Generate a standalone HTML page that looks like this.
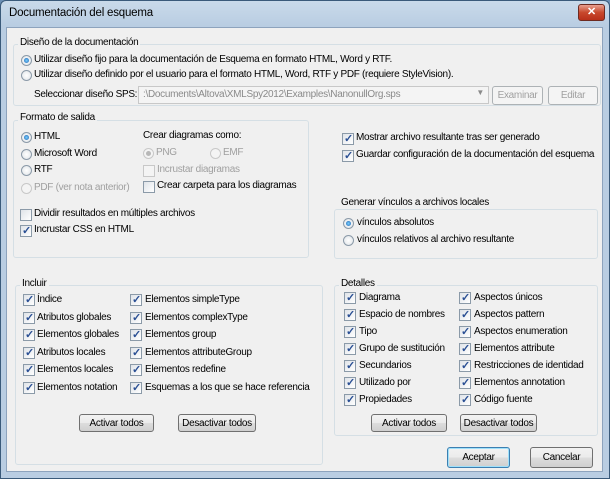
<!DOCTYPE html>
<html><head><meta charset="utf-8"><style>
*{margin:0;padding:0;box-sizing:border-box}
body{width:610px;height:479px;overflow:hidden;background:#6b8fb5;font-family:"Liberation Sans",sans-serif;font-size:10px;letter-spacing:-0.3px;color:#000}
.win{position:absolute;left:0;top:0;width:610px;height:479px;border:1px solid #3a5a7a;border-radius:6px 6px 0 0;background:linear-gradient(#c9daea,#b9cde2 25px);}
.title{position:absolute;left:8px;top:6px;font-size:11.5px;letter-spacing:-0.2px;color:#000}
.close{position:absolute;left:577px;top:3px;width:27px;height:17px;border:1px solid #6d2a20;border-radius:3px;background:linear-gradient(#e8a090,#c8482c 50%,#b8301a);color:#fff;font-weight:bold;text-align:center;line-height:15px;font-size:11px}
.body{position:absolute;left:6px;top:27px;width:597px;height:445px;background:#f0f0f0;border:1px solid #8da3bd}
.a{position:absolute;white-space:nowrap}
.g{position:absolute;border:1px solid #d5dfe5;border-radius:3px}
.gl{position:absolute;background:#f0f0f0;padding:0 2px;white-space:nowrap}
.r{position:absolute;width:11px;height:11px;border-radius:50%;border:1px solid #8b9aa8;background:radial-gradient(#fff,#dde2e6)}
.r.on::after{content:"";position:absolute;left:2px;top:2px;width:5px;height:5px;border-radius:50%;background:radial-gradient(#7ad1ff,#1d5fb0)}
.r.dis{border-color:#c8c8c8;background:#f4f4f4}
.r.dis.on::after{background:#b8b8b8}
.c{position:absolute;width:12px;height:12px;border:1px solid #8b9aa8;background:linear-gradient(135deg,#dfe3e8,#fff)}
.c.on::after{content:"✓";position:absolute;left:1px;top:-2px;font-size:11px;color:#2a4f94;font-weight:bold}
.c.dis{border-color:#c8c8c8;background:#f4f4f4}
.dis-t{color:#a0a0a0}
.b{position:absolute;white-space:nowrap;border:1px solid #707070;border-radius:3px;background:linear-gradient(#f2f2f2,#ebebeb 50%,#dddddd 51%,#cfcfcf);text-align:center;line-height:17px}
.bd{border-color:#adb2b5;color:#a0a0a0;background:#f4f4f4}
</style></head><body>
<div class="win">
<div class="title">Documentación del esquema</div>
<div class="close">✕</div>
</div>
<div style="position:absolute;left:0;top:0">
<div class="body"></div>

<div class="g" style="left:13px;top:44px;width:588px;height:62px"></div>
<div class="gl" style="left:18px;top:37px">Diseño de la documentación</div>
<div class="r on" style="left:21px;top:55px"></div><div class="a" style="left:34px;top:54px">Utilizar diseño fijo para la documentación de Esquema en formato HTML, Word y RTF.</div>
<div class="r" style="left:21px;top:70px"></div><div class="a" style="left:34px;top:69px">Utilizar diseño definido por el usuario para el formato HTML, Word, RTF y PDF (requiere StyleVision).</div>
<div class="a" style="left:34px;top:89px">Seleccionar diseño SPS:</div>
<div class="a" style="left:138px;top:86px;width:351px;height:18px;border:1px solid #c8c8c8;background:#f4f4f4;color:#8a8a8a;padding:2px 4px">:\Documents\Altova\XMLSpy2012\Examples\NanonullOrg.sps<span style="position:absolute;right:4px;top:1px;font-size:8px">▼</span></div>
<div class="b bd" style="left:492px;top:86px;width:51px;height:19px">Examinar</div>
<div class="b bd" style="left:548px;top:86px;width:50px;height:19px">Editar</div>

<div class="g" style="left:13px;top:120px;width:296px;height:138px"></div>
<div class="gl" style="left:18px;top:112px">Formato de salida</div>
<div class="r on" style="left:21px;top:132px"></div><div class="a" style="left:34px;top:131px">HTML</div>
<div class="r" style="left:21px;top:149px"></div><div class="a" style="left:34px;top:148px">Microsoft Word</div>
<div class="r" style="left:21px;top:165px"></div><div class="a" style="left:34px;top:164px">RTF</div>
<div class="r dis" style="left:21px;top:183px"></div><div class="a dis-t" style="left:34px;top:182px">PDF (ver nota anterior)</div>
<div class="a" style="left:143px;top:130px">Crear diagramas como:</div>
<div class="r dis on" style="left:143px;top:148px"></div><div class="a dis-t" style="left:156px;top:147px">PNG</div>
<div class="r dis" style="left:210px;top:148px"></div><div class="a dis-t" style="left:223px;top:147px">EMF</div>
<div class="c dis" style="left:143px;top:165px"></div><div class="a dis-t" style="left:157px;top:164px">Incrustar diagramas</div>
<div class="c" style="left:143px;top:181px"></div><div class="a" style="left:157px;top:180px">Crear carpeta para los diagramas</div>
<div class="c" style="left:20px;top:209px"></div><div class="a" style="left:34px;top:208px">Dividir resultados en múltiples archivos</div>
<div class="c on" style="left:20px;top:225px"></div><div class="a" style="left:34px;top:224px">Incrustar CSS en HTML</div>

<div class="c on" style="left:342px;top:133px"></div><div class="a" style="left:356px;top:132px">Mostrar archivo resultante tras ser generado</div>
<div class="c on" style="left:342px;top:150px"></div><div class="a" style="left:356px;top:149px">Guardar configuración de la documentación del esquema</div>

<div class="g" style="left:334px;top:209px;width:264px;height:50px"></div>
<div class="gl" style="left:339px;top:197px">Generar vínculos a archivos locales</div>
<div class="r on" style="left:343px;top:218px"></div><div class="a" style="left:357px;top:217px">vínculos absolutos</div>
<div class="r" style="left:343px;top:235px"></div><div class="a" style="left:357px;top:234px">vínculos relativos al archivo resultante</div>

<div class="g" style="left:15px;top:285px;width:308px;height:180px"></div>
<div class="gl" style="left:20px;top:278px">Incluir</div>
<div class="c on" style="left:23px;top:294px"></div><div class="a" style="left:37px;top:294px">Índice</div>
<div class="c on" style="left:23px;top:312px"></div><div class="a" style="left:37px;top:312px">Atributos globales</div>
<div class="c on" style="left:23px;top:329px"></div><div class="a" style="left:37px;top:329px">Elementos globales</div>
<div class="c on" style="left:23px;top:347px"></div><div class="a" style="left:37px;top:347px">Atributos locales</div>
<div class="c on" style="left:23px;top:364px"></div><div class="a" style="left:37px;top:364px">Elementos locales</div>
<div class="c on" style="left:23px;top:382px"></div><div class="a" style="left:37px;top:382px">Elementos notation</div>
<div class="c on" style="left:130px;top:294px"></div><div class="a" style="left:145px;top:294px">Elementos simpleType</div>
<div class="c on" style="left:130px;top:312px"></div><div class="a" style="left:145px;top:312px">Elementos complexType</div>
<div class="c on" style="left:130px;top:329px"></div><div class="a" style="left:145px;top:329px">Elementos group</div>
<div class="c on" style="left:130px;top:347px"></div><div class="a" style="left:145px;top:347px">Elementos attributeGroup</div>
<div class="c on" style="left:130px;top:364px"></div><div class="a" style="left:145px;top:364px">Elementos redefine</div>
<div class="c on" style="left:130px;top:382px"></div><div class="a" style="left:145px;top:382px">Esquemas a los que se hace referencia</div>
<div class="b" style="left:79px;top:414px;width:75px;height:18px">Activar todos</div>
<div class="b" style="left:178px;top:414px;width:78px;height:18px">Desactivar todos</div>

<div class="g" style="left:334px;top:285px;width:264px;height:151px"></div>
<div class="gl" style="left:339px;top:278px">Detalles</div>
<div class="c on" style="left:344px;top:292px"></div><div class="a" style="left:359px;top:292px">Diagrama</div>
<div class="c on" style="left:344px;top:309px"></div><div class="a" style="left:359px;top:309px">Espacio de nombres</div>
<div class="c on" style="left:344px;top:326px"></div><div class="a" style="left:359px;top:326px">Tipo</div>
<div class="c on" style="left:344px;top:343px"></div><div class="a" style="left:359px;top:343px">Grupo de sustitución</div>
<div class="c on" style="left:344px;top:360px"></div><div class="a" style="left:359px;top:360px">Secundarios</div>
<div class="c on" style="left:344px;top:377px"></div><div class="a" style="left:359px;top:377px">Utilizado por</div>
<div class="c on" style="left:344px;top:394px"></div><div class="a" style="left:359px;top:394px">Propiedades</div>
<div class="c on" style="left:459px;top:292px"></div><div class="a" style="left:474px;top:292px">Aspectos únicos</div>
<div class="c on" style="left:459px;top:309px"></div><div class="a" style="left:474px;top:309px">Aspectos pattern</div>
<div class="c on" style="left:459px;top:326px"></div><div class="a" style="left:474px;top:326px">Aspectos enumeration</div>
<div class="c on" style="left:459px;top:343px"></div><div class="a" style="left:474px;top:343px">Elementos attribute</div>
<div class="c on" style="left:459px;top:360px"></div><div class="a" style="left:474px;top:360px">Restricciones de identidad</div>
<div class="c on" style="left:459px;top:377px"></div><div class="a" style="left:474px;top:377px">Elementos annotation</div>
<div class="c on" style="left:459px;top:394px"></div><div class="a" style="left:474px;top:394px">Código fuente</div>
<div class="b" style="left:371px;top:414px;width:76px;height:18px">Activar todos</div>
<div class="b" style="left:460px;top:414px;width:77px;height:18px">Desactivar todos</div>

<div class="b" style="left:447px;top:447px;width:63px;height:21px;line-height:19px;border-color:#3c7fb1;box-shadow:inset 0 0 0 1px #9fe0fa">Aceptar</div>
<div class="b" style="left:530px;top:447px;width:63px;height:21px;line-height:19px">Cancelar</div>
</div>
</body></html>
